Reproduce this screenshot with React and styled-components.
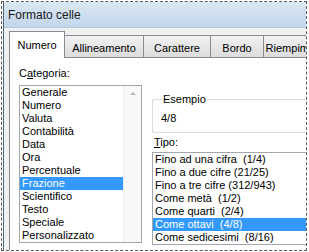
import React from 'react';
import styled, { createGlobalStyle } from 'styled-components';

const GlobalStyle = createGlobalStyle`
  html, body {
    margin: 0;
    padding: 0;
    background: #ffffff;
  }
  body {
    font-family: "Liberation Sans", Arial, sans-serif;
    font-size: 11px;
    color: #000;
  }
`;

const categorie = [
  'Generale', 'Numero', 'Valuta', 'Contabilità', 'Data', 'Ora',
  'Percentuale', 'Frazione', 'Scientifico', 'Testo', 'Speciale', 'Personalizzato',
];

const tipi = [
  'Fino ad una cifra  (1/4)',
  'Fino a due cifre (21/25)',
  'Fino a tre cifre (312/943)',
  'Come metà  (1/2)',
  'Come quarti  (2/4)',
  'Come ottavi  (4/8)',
  'Come sedicesimi  (8/16)',
];

const tabs = [
  { label: 'Numero', w: 56 },
  { label: 'Allineamento', w: 80 },
  { label: 'Carattere', w: 68 },
  { label: 'Bordo', w: 54 },
  { label: 'Riempimento', w: 70 },
];

const App = () => {
  return (
    <>
      <GlobalStyle />
      <Crop>
        <Window>
          <TitleBar>Formato celle</TitleBar>
          <Body>
            <TabStrip>
              {tabs.map((t, i) => (
                <Tab key={t.label} $active={i === 0} $w={t.w}>{t.label}</Tab>
              ))}
            </TabStrip>
            <Panel>
              <LeftCol>
                <Label>C<u>a</u>tegoria:</Label>
                <ListBox $w={123}>
                  <Items>
                    {categorie.map((c) => (
                      <Item key={c} $selected={c === 'Frazione'}>{c}</Item>
                    ))}
                  </Items>
                  <ScrollBar>
                    <ArrowUp />
                  </ScrollBar>
                </ListBox>
              </LeftCol>
              <RightCol>
                <GroupBox>
                  <Legend>Esempio</Legend>
                  <Sample>4/8</Sample>
                </GroupBox>
                <Label $tight><u>T</u>ipo:</Label>
                <ListBox $w={180}>
                  <Items>
                    {tipi.map((t) => (
                      <Item key={t} $selected={t.startsWith('Come ottavi')}>{t}</Item>
                    ))}
                  </Items>
                </ListBox>
              </RightCol>
            </Panel>
          </Body>
        </Window>
      </Crop>
    </>
  );
};

const Crop = styled.div`
  box-sizing: border-box;
  margin: 1px 0 0 1px;
  width: 306px;
  height: 250px;
  border: 1px dashed #5a5a5a;
  overflow: hidden;
  background: #fff;
`;

const Window = styled.div`
  margin-left: 1px;
  height: 100%;
  border-left: 1px solid #55657a;
  background: #f0f0f0;
  display: flex;
  flex-direction: column;
`;

const TitleBar = styled.div`
  height: 25px;
  flex: none;
  display: flex;
  align-items: center;
  padding-left: 4px;
  font-size: 12px;
  color: #1a1a1a;
  background: linear-gradient(#dbe7f4, #c2d6ec);
  border-bottom: 1px solid #b4c8de;
`;

const Body = styled.div`
  flex: 1;
  display: flex;
  flex-direction: column;
  padding-left: 5px;
`;

const TabStrip = styled.div`
  display: flex;
  align-items: flex-end;
  height: 30px;
  position: relative;
  z-index: 1;
  margin-bottom: -1px;
  white-space: nowrap;
`;

const Tab = styled.div`
  box-sizing: border-box;
  flex: none;
  width: ${(p) => p.$w}px;
  height: ${(p) => (p.$active ? 27 : 23)}px;
  margin-right: -1px;
  display: flex;
  align-items: center;
  justify-content: center;
  padding-top: ${(p) => (p.$active ? 0 : 2)}px;
  border: 1px solid #898c95;
  border-bottom: ${(p) => (p.$active ? 'none' : '1px solid #898c95')};
  background: ${(p) => (p.$active ? '#ffffff' : 'linear-gradient(#f2f2f2, #dcdcdc)')};
  position: relative;
  z-index: ${(p) => (p.$active ? 2 : 1)};
  overflow: hidden;
`;

const Panel = styled.div`
  flex: 1;
  display: flex;
  gap: 10px;
  padding: 9px 0 0 9px;
  background: #ffffff;
  border-top: 1px solid #898c95;
  border-left: 1px solid #898c95;
`;

const LeftCol = styled.div`
  display: flex;
  flex-direction: column;
`;

const RightCol = styled.div`
  display: flex;
  flex-direction: column;
  padding-top: 26px;
  flex: 1;
`;

const Label = styled.div`
  line-height: 13px;
  margin: ${(p) => (p.$tight ? '3px 0 3px 2px' : '0 0 5px 0')};
`;

const ListBox = styled.div`
  box-sizing: border-box;
  width: ${(p) => p.$w}px;
  border: 1px solid #a3a6ac;
  display: flex;
  align-items: flex-start;
  background: #fff;
  flex: none;
`;

const Items = styled.div`
  flex: 1;
  display: flex;
  flex-direction: column;
`;

const Item = styled.div`
  height: 13px;
  line-height: 13px;
  padding-left: 2px;
  white-space: pre;
  background: ${(p) => (p.$selected ? '#3399ff' : 'transparent')};
  color: ${(p) => (p.$selected ? '#ffffff' : '#000000')};
`;

const ScrollBar = styled.div`
  align-self: stretch;
  width: 17px;
  background: #f8f8f8;
  border-left: 1px solid #ececec;
  display: flex;
  justify-content: center;
  padding-top: 6px;
`;

const ArrowUp = styled.div`
  width: 0;
  height: 0;
  border-left: 3px solid transparent;
  border-right: 3px solid transparent;
  border-bottom: 3px solid #b8b8b8;
`;

const GroupBox = styled.fieldset`
  margin: 0;
  padding: 6px 0 5px 7px;
  height: 40px;
  box-sizing: border-box;
  border: 1px solid #d5dfe5;
  border-right: none;
  border-radius: 3px 0 0 3px;
`;

const Legend = styled.legend`
  padding: 0 1px;
  margin-left: 2px;
  line-height: 13px;
`;

const Sample = styled.div`
  line-height: 13px;
  padding-left: 1px;
`;

export default App;
